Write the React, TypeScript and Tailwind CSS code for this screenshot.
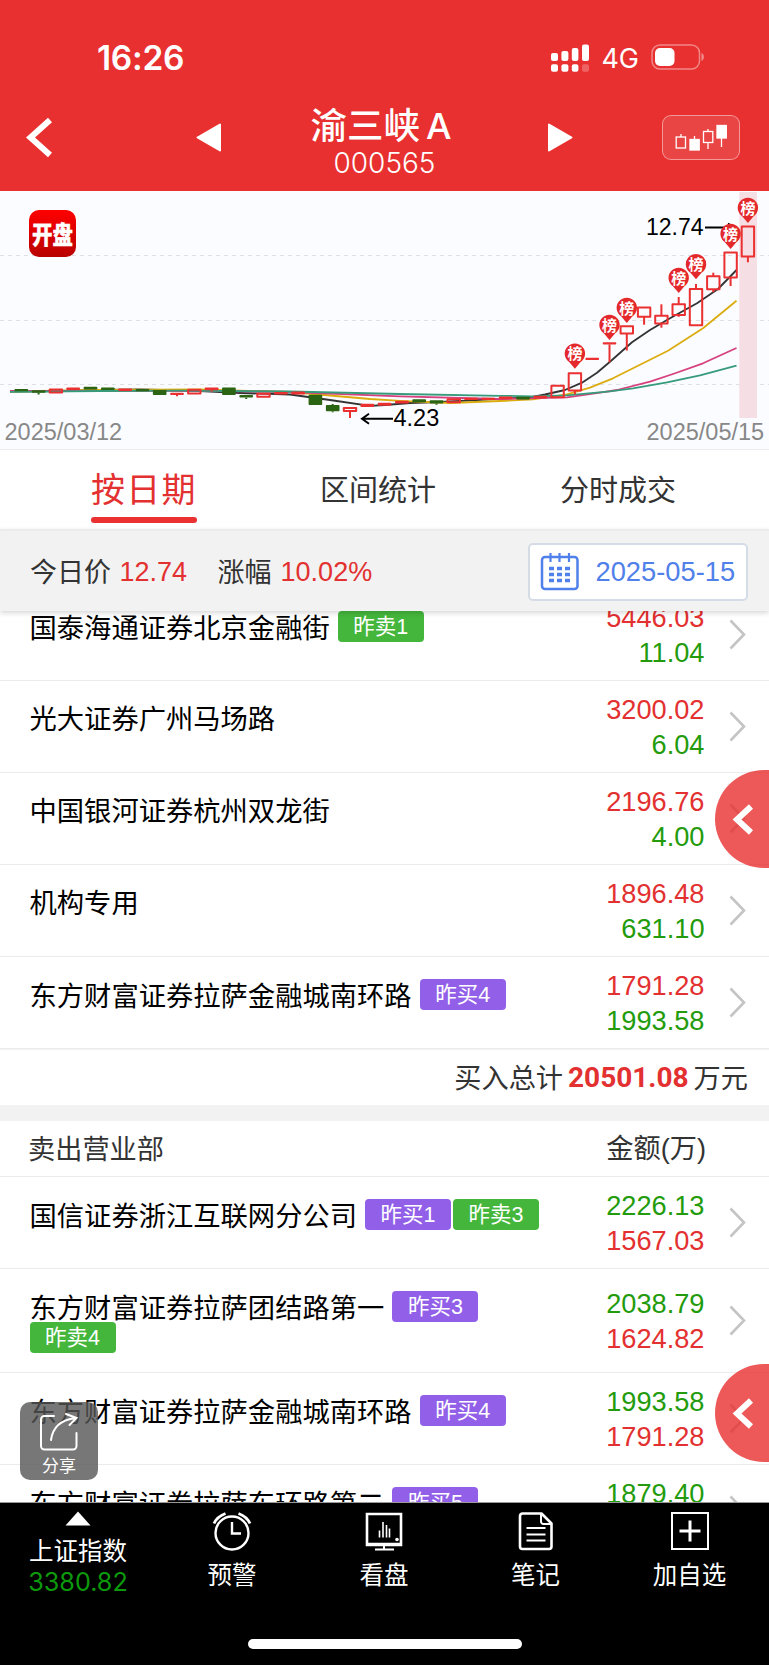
import clsx from 'clsx';

interface Seat {
  name: string;
  tags: string[];
  amounts: [string, string];
}

interface Candle {
  top: number;
  bottom: number;
  high?: number;
  low?: number;
  kind: 'up' | 'down' | 'flat';
}

const buySeats: Seat[] = [
  { name: '国泰海通证券北京金融街', tags: ['昨卖1'], amounts: ['5446.03', '11.04'] },
  { name: '光大证券广州马场路', tags: [], amounts: ['3200.02', '6.04'] },
  { name: '中国银河证券杭州双龙街', tags: [], amounts: ['2196.76', '4.00'] },
  { name: '机构专用', tags: [], amounts: ['1896.48', '631.10'] },
  { name: '东方财富证券拉萨金融城南环路', tags: ['昨买4'], amounts: ['1791.28', '1993.58'] },
];

const sellSeats: Seat[] = [
  { name: '国信证券浙江互联网分公司', tags: ['昨买1', '昨卖3'], amounts: ['2226.13', '1567.03'] },
  { name: '东方财富证券拉萨团结路第一', tags: ['昨买3', '昨卖4'], amounts: ['2038.79', '1624.82'] },
  { name: '东方财富证券拉萨金融城南环路', tags: ['昨买4'], amounts: ['1993.58', '1791.28'] },
  { name: '东方财富证券拉萨东环路第二', tags: ['昨买5'], amounts: ['1879.40', '1624.10'] },
];

// up = hollow red, flat = solid red, down = solid green
const candles: Candle[] = [
  { top: 389, bottom: 391.3, kind: 'down' },
  { top: 390.2, bottom: 392.7, low: 394.5, kind: 'down' },
  { top: 389.6, bottom: 392.4, kind: 'up' },
  { top: 387.5, bottom: 390, kind: 'flat' },
  { top: 386.8, bottom: 389.5, kind: 'down' },
  { top: 387.5, bottom: 390, kind: 'down' },
  { top: 388.5, bottom: 391, kind: 'flat' },
  { top: 389, bottom: 391.3, kind: 'down' },
  { top: 390, bottom: 395, kind: 'down' },
  { top: 392.7, bottom: 395, low: 396.3, kind: 'flat' },
  { top: 389.8, bottom: 393.4, kind: 'up' },
  { top: 387.5, bottom: 390.3, low: 391.7, kind: 'flat' },
  { top: 387.5, bottom: 395, kind: 'down' },
  { top: 395, bottom: 397.6, low: 399, kind: 'down' },
  { top: 393.7, bottom: 396.8, kind: 'up' },
  { top: 392, bottom: 394.5, kind: 'flat' },
  { top: 391.4, bottom: 394.6, kind: 'flat' },
  { top: 394.7, bottom: 405, kind: 'down' },
  { top: 405, bottom: 411.3, high: 404, low: 412.3, kind: 'down' },
  { top: 408, bottom: 411, low: 418, kind: 'up' },
  { top: 403.8, bottom: 407, kind: 'flat' },
  { top: 402.7, bottom: 405.8, kind: 'flat' },
  { top: 400.7, bottom: 403.5, kind: 'flat' },
  { top: 399.2, bottom: 402.2, kind: 'down' },
  { top: 400.2, bottom: 403.4, low: 404.8, kind: 'down' },
  { top: 399.2, bottom: 402.3, kind: 'up' },
  { top: 397.8, bottom: 400, kind: 'flat' },
  { top: 397.8, bottom: 400, kind: 'flat' },
  { top: 396.6, bottom: 399.2, kind: 'flat' },
  { top: 396.8, bottom: 399.4, kind: 'down' },
  { top: 395.8, bottom: 398.6, kind: 'flat' },
  { top: 385.8, bottom: 397.3, kind: 'up' },
  { top: 373.3, bottom: 390.5, low: 394.5, kind: 'up' },
  { top: 357.8, bottom: 360, kind: 'flat' },
  { top: 342.2, bottom: 344.4, low: 362.3, kind: 'flat' },
  { top: 326.2, bottom: 333.4, low: 350.5, kind: 'up' },
  { top: 307.5, bottom: 316.8, low: 324.7, kind: 'up' },
  { top: 315.8, bottom: 323.5, high: 304.3, low: 327.7, kind: 'up' },
  { top: 304.2, bottom: 315, high: 297, low: 316.8, kind: 'up' },
  { top: 289, bottom: 325.3, high: 284, kind: 'up' },
  { top: 276.2, bottom: 289.3, high: 272.7, low: 292.3, kind: 'up' },
  { top: 252.6, bottom: 277.6, low: 286, kind: 'up' },
  { top: 226.6, bottom: 256.6, low: 262.3, kind: 'up' },
];

const pins = [
  { index: 32, top: 343.7 },
  { index: 34, top: 315 },
  { index: 35, top: 298 },
  { index: 38, top: 268 },
  { index: 39, top: 254.3 },
  { index: 41, top: 224 },
  { index: 42, top: 198 },
];

const averages = [
  {
    color: '#333333',
    points:
      '10,391.5 60,391 100,390 140,389.5 200,391 240,393 290,394.5 330,400 370,405.8 385,405 410,403 440,402 500,398.8 530,397.5 545,394.5 565,390 582,382.7 597,372.7 610,361.7 632,342.3 650,330 670,318.3 697,303.3 718,289 736.5,270',
  },
  {
    color: '#dbac10',
    points:
      '10,391.5 100,390 200,389.5 290,392 330,395.5 370,399 400,400.8 450,403 500,401 533,399.3 567,394.3 590,387.7 613,378.3 633,368.3 668,350.7 703,328.3 736.5,300.7',
  },
  {
    color: '#d6407e',
    points:
      '10,391 200,390.8 290,392 400,396.4 500,399 567,397.3 600,392.7 617,390 650,381.7 673,374 703,363.3 736.5,348',
  },
  {
    color: '#369b7b',
    points:
      '10,391.9 100,391 180,390.7 290,391.5 400,394 500,395.8 533,396.3 567,395.3 610,391.3 633,388.3 667,382.3 700,375.3 736.5,365.7',
  },
];

const candleX = (index: number) => 21.3 + index * 17.3;

function StatusBar() {
  return (
    <div className="flex h-[84px] items-end justify-between pr-[64px] pb-[9px] pl-[97px]">
      <span className="font-[Inter] text-[33.5px] leading-[34px] font-semibold tracking-[-0.3px]">
        16:26
      </span>
      <div className="mb-[1px] flex items-center">
        <svg className="mb-[2px]" width="38" height="28" viewBox="0 0 38 28" fill="#fff">
          <rect x="0" y="9" width="7" height="8" rx="2" />
          <rect x="10.4" y="7" width="7" height="10" rx="2" />
          <rect x="20.8" y="4" width="6.6" height="13" rx="2" />
          <rect x="31" y="0.6" width="7" height="16.4" rx="2" />
          <rect x="0" y="20.2" width="7" height="7.6" rx="2" />
          <rect x="10.4" y="20.2" width="7" height="7.6" rx="2" />
          <rect x="20.8" y="20.2" width="6.6" height="7.6" rx="2" />
          <rect x="31" y="20.2" width="7" height="7.6" rx="2" opacity="0.25" />
        </svg>
        <span className="ml-[12px] font-[Inter] text-[27px] leading-[30px]">4G</span>
        <svg className="mb-[4px] ml-[12px]" width="54" height="26" viewBox="0 0 54 26" fill="none">
          <rect x="1" y="1" width="47.5" height="24" rx="8" stroke="#fff" strokeOpacity="0.42" strokeWidth="1.500" />
          <rect x="4" y="4" width="19.500" height="18" rx="5" fill="#fff" />
          <path d="M50.500 9v8c3.200-1.600 3.200-6.400 0-8z" fill="#fff" fillOpacity="0.45" />
        </svg>
      </div>
    </div>
  );
}

function NavBar() {
  return (
    <div className="flex h-[107px] items-start">
      <svg className="mt-[33px] ml-[26px]" width="27" height="41" viewBox="0 0 27 41" fill="none">
        <path d="M24 3 4.500 20.500 24 38" stroke="#fff" strokeWidth="6" />
      </svg>
      <svg className="mt-[38px] ml-[143px]" width="26" height="31" viewBox="0 0 26 31" fill="#fff">
        <path d="M1.500 15.500 24 2.500v26z" stroke="#fff" strokeWidth="2" strokeLinejoin="round" />
      </svg>
      <div className="ml-[67px] flex w-[184px] flex-col items-center">
        <div className="mt-[18px] flex items-baseline gap-[6px] text-[36.5px] leading-[44px] font-medium">
          <span>渝三峡</span>
          <span className="font-[Inter] text-[36px]">A</span>
        </div>
        <span className="ml-[7px] font-[Inter] text-[28px] leading-[30px] font-light">000565</span>
      </div>
      <svg className="mt-[38px] ml-[74px]" width="26" height="31" viewBox="0 0 26 31" fill="#fff">
        <path d="M24.500 15.500 2 2.500v26z" stroke="#fff" strokeWidth="2" strokeLinejoin="round" />
      </svg>
      <div className="mt-[31px] ml-[88.5px] h-[45px] w-[78px] rounded-[9px] border border-white/45 bg-white/10">
        <svg width="76" height="43" viewBox="0 0 76 43" fill="none" stroke="#fff" strokeWidth="1.300">
          <path d="M18 18v3M31.500 20v4M45 13v3M45 27v6M58.500 22v9" />
          <rect x="13.200" y="21" width="9.300" height="11" />
          <rect x="27" y="23.500" width="9.200" height="10.500" fill="#fff" />
          <rect x="40.500" y="15.500" width="9.300" height="11" />
          <rect x="54" y="9.500" width="9.300" height="12.500" fill="#fff" />
        </svg>
      </div>
    </div>
  );
}

function CandleMark({ candle, x }: { candle: Candle; x: number }) {
  const color = candle.kind === 'down' ? '#2b6412' : '#ea3030';
  const { top, bottom, high, low } = candle;
  return (
    <g stroke={color} strokeWidth="2">
      {high && <path d={`M${x} ${high}V${top}`} />}
      {low && <path d={`M${x} ${bottom}V${low}`} />}
      {candle.kind === 'up' ? (
        <rect x={x - 6.2} y={top} width="12.400" height={bottom - top} fill="none" strokeLinejoin="round" />
      ) : (
        <rect x={x - 6.8} y={top} width="13.600" height={bottom - top} rx="0.800" fill={color} stroke="none" />
      )}
    </g>
  );
}

function Chart() {
  return (
    <div className="relative h-[259px] border-b border-[#ececec] bg-[#fbfcff]">
      <svg width="769" height="258" viewBox="0 191 769 258" fill="none">
        <path d="M0 255.500H769M0 320.500H769M0 384.500H769" stroke="#dfe0e5" strokeDasharray="4 4" />
        <rect x="739.300" y="192" width="17.700" height="226" fill="#f6dfe4" />
        {averages.map((line) => (
          <polyline key={line.color} points={line.points} stroke={line.color} strokeWidth="1.800" strokeLinejoin="round" />
        ))}
        {candles.map((candle, index) => (
          <CandleMark key={index} candle={candle} x={candleX(index)} />
        ))}
        <path d="M705 227.500H731M728 223.500 734 227.500" stroke="#000" strokeWidth="1.800" />
        <path d="M393 418.800H363M369 413.800 362 418.800 369 423.800" stroke="#000" strokeWidth="2" />
        {pins.map((pin) => {
          const x = candleX(pin.index);
          return (
            <g key={pin.index}>
              <path
                d={`M${x} ${pin.top + 25}L${x - 5.5} ${pin.top + 18.5}A10.200 10.200 0 1 1 ${x + 5.5} ${pin.top + 18.5}Z`}
                fill="#e4292c"
              />
              <text x={x} y={pin.top + 15.6} fill="#fff" fontSize="15" fontWeight="700" textAnchor="middle">
                榜
              </text>
            </g>
          );
        })}
        <g className="font-['Liberation_Sans']" fontSize="23.500">
          <text x="646" y="234.500" fill="#000" fontSize="23">12.74</text>
          <text x="393.500" y="426.300" fill="#000">4.23</text>
          <text x="4.500" y="440.300" fill="#888">2025/03/12</text>
          <text x="646.500" y="440.300" fill="#888">2025/05/15</text>
        </g>
      </svg>
      <div className="absolute top-[19px] left-[29px] flex h-[47px] w-[47px] items-center justify-center rounded-[10px] bg-linear-to-b from-[#fe0000] to-[#b90000] text-[20.5px] leading-none font-black">
        <span className="scale-y-120 text-white [-webkit-text-stroke:0.3px_white]">开盘</span>
      </div>
    </div>
  );
}

function Tabs() {
  return (
    <div className="flex h-[79px] text-[29px] text-[#333]">
      <div className="ml-[91px] flex w-[106px] flex-col">
        <span className="mt-[14px] text-[34px] leading-[48px] tracking-[1.3px] text-[#e33030]">按日期</span>
        <span className="mt-[5px] h-[6px] shrink-0 rounded-full bg-[#ea3030]" />
      </div>
      <span className="mt-[16px] ml-[123px] leading-[44px]">区间统计</span>
      <span className="mt-[16px] ml-[124px] leading-[44px]">分时成交</span>
    </div>
  );
}

function InfoBar() {
  return (
    <div className="relative z-10 flex h-[82px] items-center border-t-2 border-[#ececec] bg-[#f2f2f2] pt-[1px] pr-[21px] pl-[30px] text-[27px] text-[#333] shadow-[0_2px_5px_rgba(0,0,0,0.16)]">
      <span>今日价</span>
      <span className="mt-[2px] ml-[8.5px] font-['Liberation_Sans'] text-[#e33030]">12.74</span>
      <span className="ml-[30.5px]">涨幅</span>
      <span className="mt-[2px] ml-[9px] font-['Liberation_Sans'] text-[#e33030]">10.02%</span>
      <div className="ml-auto flex h-[58px] w-[220px] items-center rounded-[5px] border-2 border-[#d6dce6] bg-white pl-[10px] text-[#5080ea]">
        <svg width="40" height="38" viewBox="0 0 40 38" fill="none" stroke="currentColor">
          <rect x="2" y="4" width="35.500" height="32" rx="3" strokeWidth="2.500" />
          <path d="M10.500 0v9M19.500 0v9M29 0v9" strokeWidth="2.200" />
          <path d="M9 15.500h5m3 0h5m3 0h5M9 21.500h5m3 0h5m3 0h5M9 27.500h5m3 0h5m3 0h5" strokeWidth="3.600" />
        </svg>
        <span className="mt-[2px] ml-[15.5px] font-['Liberation_Sans'] text-[27.3px]">2025-05-15</span>
      </div>
    </div>
  );
}

function SeatRow({ seat, side }: { seat: Seat; side: 'buy' | 'sell' }) {
  return (
    <div className="flex min-h-[92px] shrink-0 border-b border-[#ebebeb] pl-[29.5px]">
      <div className="flex w-[520px] flex-wrap content-start items-center pt-[22px] pb-[19px]">
        <span className="mr-[8px] -mt-[1px] text-[27.3px] leading-[31px] text-black">{seat.name}</span>
        {seat.tags.map((tag) => (
          <span
            key={tag}
            className={clsx(
              "mr-[2px] h-[31px] w-[86px] rounded-[4px] text-center font-['Liberation_Sans','Noto_Sans_CJK_SC',sans-serif] text-[21.5px] leading-[33px] text-white",
              tag.includes('买') ? 'bg-[#9260e8]' : 'bg-[#43b63b]',
            )}
          >
            {tag}
          </span>
        ))}
      </div>
      <div
        className={clsx(
          "flex w-[155px] flex-col justify-center text-right font-['Liberation_Sans'] text-[27.2px] leading-[35px]",
          side === 'buy' ? 'text-[#e33030]' : 'pt-[1px] text-[#239b0c]',
        )}
      >
        <span>{seat.amounts[0]}</span>
        <span className={side === 'buy' ? 'text-[#239b0c]' : 'text-[#e33030]'}>{seat.amounts[1]}</span>
      </div>
      <svg className="ml-[24px] self-center" width="18" height="31" viewBox="0 0 18 31" fill="none">
        <path d="M1.500 1.500 15 15.500 1.500 29.500" stroke="#c4c4c4" strokeWidth="2.600" />
      </svg>
    </div>
  );
}

function SeatList() {
  return (
    <div className="h-[891px] shrink-0 overflow-hidden">
      <div className="-mt-[22px] flex flex-col">
        {buySeats.map((seat) => (
          <SeatRow key={seat.name} seat={seat} side="buy" />
        ))}
        <div className="flex h-[56px] items-center justify-end border-t border-[#f2f2f2] pr-[21px] pb-[2px] text-[27.2px] text-[#333]">
          <span>买入总计</span>
          <span className="mx-[5px] mt-[2px] font-[Roboto] text-[28px] font-bold text-[#e33030]">20501.08</span>
          <span>万元</span>
        </div>
        <div className="h-[16px] bg-[#f2f2f2]" />
        <div className="flex h-[56px] items-center justify-between border-b border-[#ebebeb] pr-[63px] pb-[2px] pl-[28px] text-[27.2px] text-[#333]">
          <span>卖出营业部</span>
          <span>
            金额<span className="font-['Liberation_Sans']">(</span>万
            <span className="font-['Liberation_Sans']">)</span>
          </span>
        </div>
        {sellSeats.map((seat) => (
          <SeatRow key={seat.name} seat={seat} side="sell" />
        ))}
      </div>
    </div>
  );
}

function FloatingHandle({ className }: { className: string }) {
  return (
    <div className={clsx('absolute right-0 z-20 h-[98px] w-[54.5px] rounded-l-[49px] bg-[#e83030]/80', className)}>
      <svg className="mt-[34px] ml-[17px]" width="24" height="31" viewBox="0 0 24 31" fill="none">
        <path d="M19 2.500 5 15.500 19 28.500" stroke="#fff" strokeWidth="6" />
      </svg>
    </div>
  );
}

function ShareButton() {
  return (
    <div className="absolute top-[1402px] left-[20px] z-20 flex h-[78px] w-[78px] flex-col items-center rounded-[10px] bg-[#555]/80 text-white">
      <svg className="mt-[10px]" width="40" height="40" viewBox="0 0 40 40" fill="none" stroke="#fff" strokeWidth="2" strokeLinecap="round">
        <path d="M15 4H5.500a3.500 3.500 0 0 0-3.500 3.500V34a3.500 3.500 0 0 0 3.500 3.500H34a3.500 3.500 0 0 0 3.500-3.500V21" />
        <path d="M12 28C13.500 17 20 8 36.500 6M27 2l10.500 4L30.500 13" />
      </svg>
      <span className="mt-[3px] text-[17px] leading-[20px]">分享</span>
    </div>
  );
}

function BottomBar() {
  return (
    <div className="flex h-[163px] shrink-0 flex-col items-center border-t border-[#999] bg-black text-[24.5px] text-white">
      <div className="flex h-[136px] w-full">
        <div className="flex w-[156px] flex-col items-center">
          <svg className="mt-[8px]" width="26" height="15" viewBox="0 0 26 15" fill="#fff">
            <path d="M13 0.500 25.500 14.500H0.500z" />
          </svg>
          <span className="mt-[7px] leading-[34px]">上证指数</span>
          <span className="font-[Inter] text-[25.2px] leading-[30px] text-[#0c9a0c]">3380.82</span>
        </div>
        <div className="flex w-[152px] flex-col items-center">
          <svg className="mt-[8px]" width="40" height="40" viewBox="0 0 40 40" fill="none" stroke="#fff" strokeWidth="2.400">
            <circle cx="20" cy="22" r="16.500" />
            <path d="M20 11v11.500h9" />
            <path d="M2 12.500C4 8 8 4.500 13.500 2.500M38 12.500C36 8 32 4.500 26.500 2.500" strokeWidth="2.800" />
          </svg>
          <span className="mt-[6px] leading-[34px]">预警</span>
        </div>
        <div className="flex w-[152px] flex-col items-center">
          <svg className="mt-[8px]" width="40" height="40" viewBox="0 0 40 40" fill="none" stroke="#fff" strokeWidth="2.600">
            <path d="M3 3H37V34H3z" />
            <path d="M3 33.300H37" strokeWidth="3" />
            <path d="M20 34v4M11 38.500H30" strokeWidth="2" />
            <path d="M15.500 19.500v7M19 11v15.500M22.500 14v12.500M25.500 17.500v9" strokeWidth="1.600" />
            <circle cx="33" cy="28.500" r="1.800" fill="#fff" stroke="none" />
          </svg>
          <span className="mt-[6px] leading-[34px]">看盘</span>
        </div>
        <div className="flex w-[151px] flex-col items-center">
          <svg className="mt-[8px]" width="40" height="40" viewBox="0 0 40 40" fill="none" stroke="#fff" strokeWidth="2.600" strokeLinejoin="round">
            <path d="M6.500 2.500H25.500L35.500 12.500V35.500a2.500 2.500 0 0 1-2.500 2.500H6.500A2.500 2.500 0 0 1 4 35.500V5a2.500 2.500 0 0 1 2.500-2.500z" />
            <path d="M25 3v7.500a2.500 2.500 0 0 0 2.500 2.500H35" strokeWidth="2" />
            <path d="M10.500 17H29.500M10.500 23.500H29.500M10.500 29.500H29.500" strokeWidth="2" />
          </svg>
          <span className="mt-[6px] leading-[34px]">笔记</span>
        </div>
        <div className="flex w-[157px] flex-col items-center">
          <svg className="mt-[8px]" width="40" height="40" viewBox="0 0 40 40" fill="none" stroke="#fff">
            <rect x="2" y="2" width="36" height="36" strokeWidth="2" />
            <path d="M20 9.500v21M9.500 20h21" strokeWidth="3" />
          </svg>
          <span className="mt-[6px] leading-[34px]">加自选</span>
        </div>
      </div>
      <div className="h-[10px] w-[274px] rounded-full bg-white" />
    </div>
  );
}

export default function App() {
  return (
    <div className="relative flex h-[1665px] w-[769px] flex-col overflow-hidden bg-white font-['Noto_Sans_CJK_SC','Liberation_Sans',sans-serif]">
      <header className="h-[191px] shrink-0 bg-[#e83030] text-white">
        <StatusBar />
        <NavBar />
      </header>
      <Chart />
      <Tabs />
      <InfoBar />
      <SeatList />
      <BottomBar />
      <FloatingHandle className="top-[770px]" />
      <FloatingHandle className="top-[1364px]" />
      <ShareButton />
    </div>
  );
}
